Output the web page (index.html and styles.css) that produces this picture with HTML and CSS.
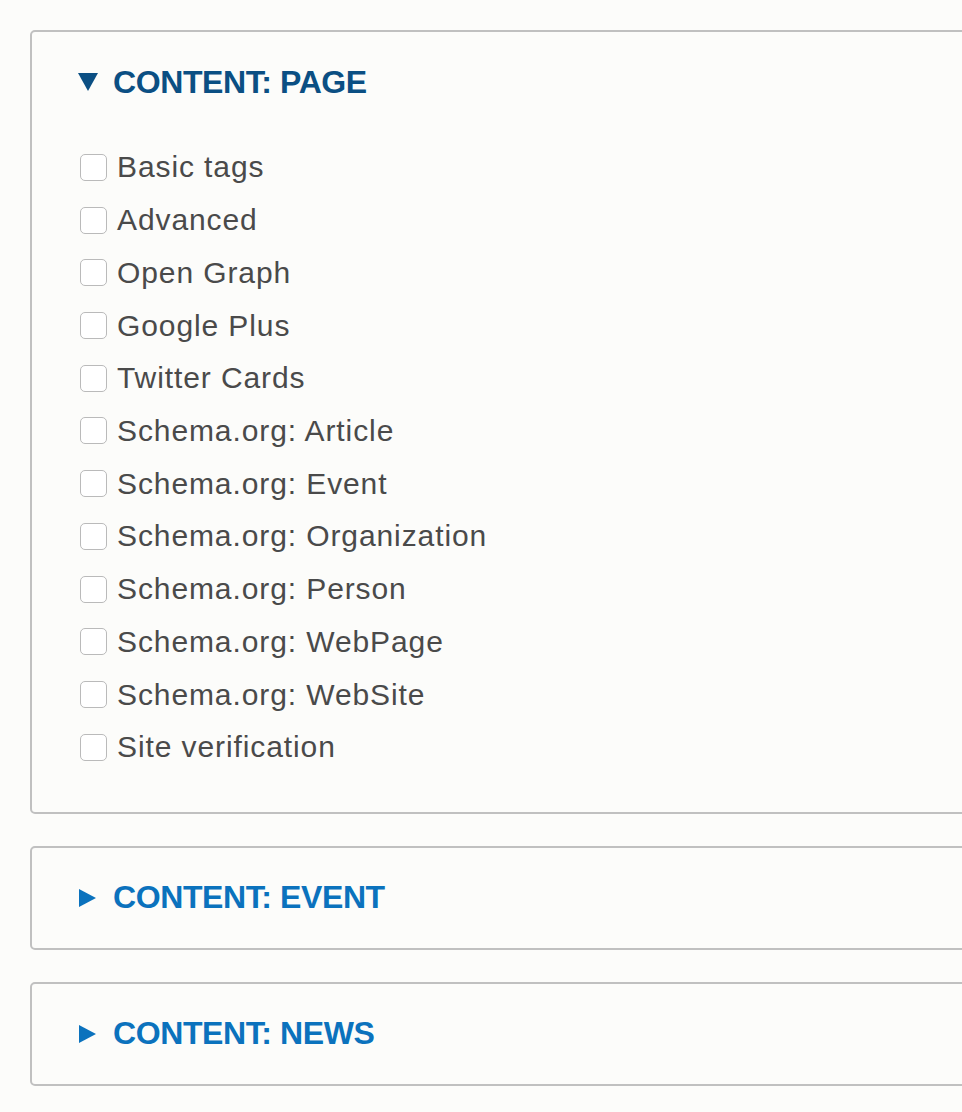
FILE: index.html
```html
<!DOCTYPE html>
<html>
<head>
<meta charset="utf-8">
<link rel="stylesheet" href="styles.css">
</head>
<body>
<div class="page">
  <section class="panel open">
    <div class="summary"><span class="tri tri-down"></span><span class="title">CONTENT: PAGE</span></div>
    <ul class="opts">
      <li><span class="cb"></span><span class="lbl">Basic tags</span></li>
      <li><span class="cb"></span><span class="lbl">Advanced</span></li>
      <li><span class="cb"></span><span class="lbl">Open Graph</span></li>
      <li><span class="cb"></span><span class="lbl">Google Plus</span></li>
      <li><span class="cb"></span><span class="lbl">Twitter Cards</span></li>
      <li><span class="cb"></span><span class="lbl">Schema.org: Article</span></li>
      <li><span class="cb"></span><span class="lbl">Schema.org: Event</span></li>
      <li><span class="cb"></span><span class="lbl">Schema.org: Organization</span></li>
      <li><span class="cb"></span><span class="lbl">Schema.org: Person</span></li>
      <li><span class="cb"></span><span class="lbl">Schema.org: WebPage</span></li>
      <li><span class="cb"></span><span class="lbl">Schema.org: WebSite</span></li>
      <li><span class="cb"></span><span class="lbl">Site verification</span></li>
    </ul>
  </section>
  <section class="panel">
    <div class="summary"><span class="tri tri-right"></span><span class="title">CONTENT: EVENT</span></div>
  </section>
  <section class="panel">
    <div class="summary"><span class="tri tri-right"></span><span class="title">CONTENT: NEWS</span></div>
  </section>
</div>
</body>
</html>
```
FILE: styles.css
```css
html, body {
  margin: 0;
  padding: 0;
  background: #fcfcfa;
  overflow: hidden;
}
body {
  font-family: "Liberation Sans", Arial, sans-serif;
  width: 962px;
  height: 1112px;
}
.page {
  padding: 30px 0 0 30px;
  display: flex;
  flex-direction: column;
  gap: 32px;
}
.panel {
  width: 1000px;
  border: 2px solid #c0c0c0;
  border-radius: 5px;
  background: #fcfcfa;
  box-sizing: border-box;
}
.summary {
  display: flex;
  align-items: center;
  height: 36px;
  padding: 32px 0 32px 46px;
}
.open .summary {
  padding-bottom: 0;
}
.title {
  font-weight: bold;
  font-size: 32px;
  letter-spacing: -0.4px;
  color: #0b72bd;
  margin-left: 15px;
}
.open .title { color: #0b4f83; }
.tri { display: inline-block; width: 0; height: 0; }
.tri-down {
  border-left: 10px solid transparent;
  border-right: 10px solid transparent;
  border-top: 18px solid #0b4f83;
}
.tri-right {
  border-top: 9px solid transparent;
  border-bottom: 9px solid transparent;
  border-left: 17px solid #0b72bd;
  margin-left: 1px;
  margin-right: 2px;
}
.opts {
  list-style: none;
  margin: 0;
  padding: 41px 0 38px 48px;
}
.opts li {
  display: flex;
  align-items: center;
  height: 52.73px;
}
.cb {
  width: 25px;
  height: 25px;
  border: 1px solid #bababa;
  border-radius: 5px;
  background: #fff;
  flex: none;
}
.lbl {
  font-size: 30px;
  letter-spacing: 0.9px;
  color: #4a4a4a;
  margin-left: 10px;
}
```
